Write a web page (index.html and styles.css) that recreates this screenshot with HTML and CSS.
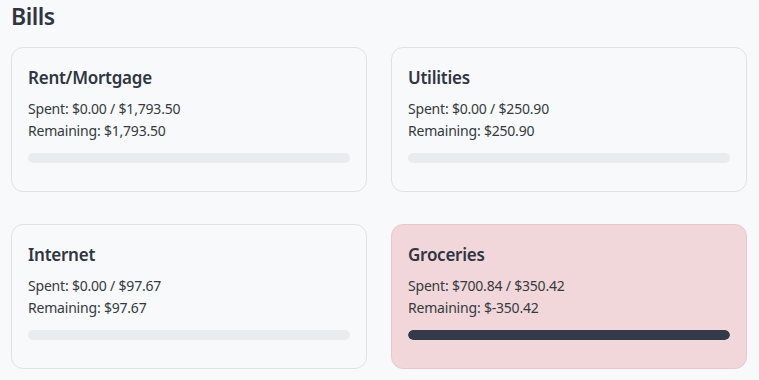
FILE: index.html
```html
<!DOCTYPE html>
<html>
<head>
<meta charset="utf-8">
<link rel="stylesheet" href="styles.css">
</head>
<body>
<main class="page">
  <h1 class="page-title">Bills</h1>
  <div class="bills">
    <section class="bill">
      <h2 class="bill-name">Rent/Mortgage</h2>
      <p class="bill-line">Spent: $0.00 / $1,793.50</p>
      <p class="bill-line">Remaining: $1,793.50</p>
      <div class="bar"><div class="bar-fill" style="width:0%"></div></div>
    </section>
    <section class="bill">
      <h2 class="bill-name">Utilities</h2>
      <p class="bill-line">Spent: $0.00 / $250.90</p>
      <p class="bill-line">Remaining: $250.90</p>
      <div class="bar"><div class="bar-fill" style="width:0%"></div></div>
    </section>
    <section class="bill">
      <h2 class="bill-name">Internet</h2>
      <p class="bill-line">Spent: $0.00 / $97.67</p>
      <p class="bill-line">Remaining: $97.67</p>
      <div class="bar"><div class="bar-fill" style="width:0%"></div></div>
    </section>
    <section class="bill bill-over">
      <h2 class="bill-name">Groceries</h2>
      <p class="bill-line">Spent: $700.84 / $350.42</p>
      <p class="bill-line">Remaining: $-350.42</p>
      <div class="bar"><div class="bar-fill" style="width:100%"></div></div>
    </section>
  </div>
</main>
</body>
</html>
```
FILE: styles.css
```css
html, body {
  margin: 0;
  padding: 0;
  background: #f8f9fa;
}
body {
  font-family: "Noto Sans", "Open Sans", sans-serif;
  color: #343a40;
}
.page {
  padding: 2px 12px 0 11px;
}
.page-title {
  margin: 0 0 16px;
  font-size: 23px;
  line-height: 29px;
  letter-spacing: -0.5px;
  font-weight: 600;
  color: #2f3542;
}
.bills {
  display: grid;
  grid-template-columns: 1fr 1fr;
  column-gap: 24px;
  row-gap: 32px;
}
.bill {
  border: 1px solid #dee2e6;
  border-radius: 12px;
  padding: 16px;
  background: #f8f9fa;
}
.bill-over {
  background: #f2d7da;
  border-color: #ebc7cb;
}
.bill-name {
  margin: 0 0 7px;
  font-size: 17px;
  line-height: 27px;
  letter-spacing: -0.25px;
  font-weight: 600;
  color: #2f3542;
}
.bill-line {
  margin: 0;
  font-size: 14px;
  line-height: 22px;
  letter-spacing: -0.2px;
  color: #343a40;
}
.bar {
  margin: 11px 0 12px;
  height: 10px;
  border-radius: 5px;
  background: #e9ecef;
  overflow: hidden;
}
.bar-fill {
  height: 100%;
  background: #333b4b;
  border-radius: 5px;
}
```
